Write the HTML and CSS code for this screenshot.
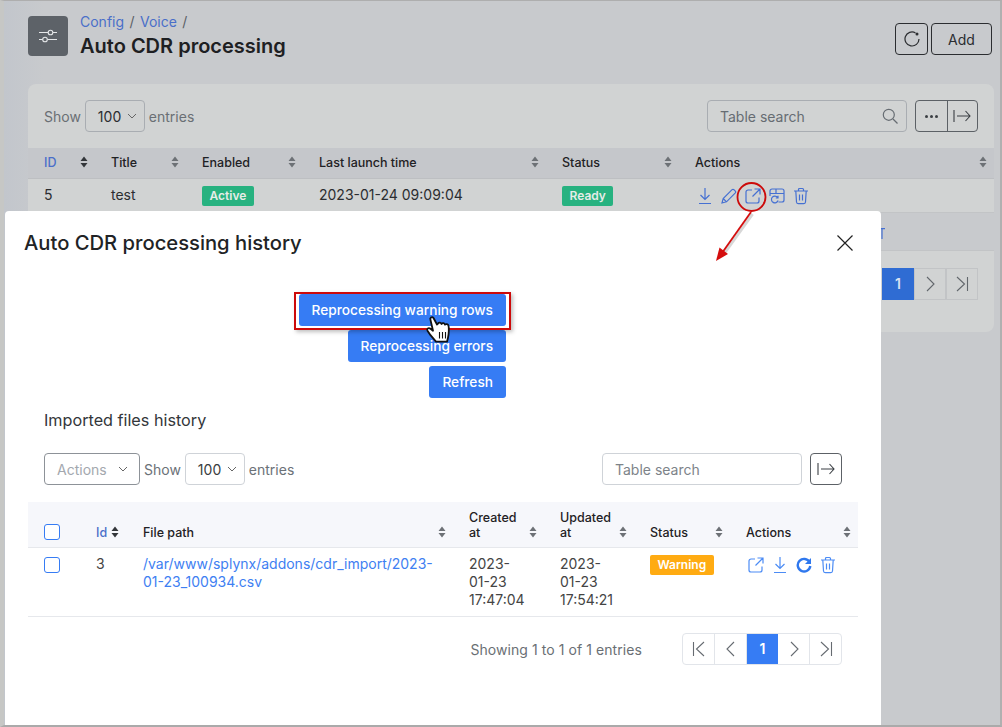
FILE: index.html
```html
<!DOCTYPE html>
<html lang="en">
<head>
  <meta charset="UTF-8">
  <title>Auto CDR processing</title>
  <link rel="stylesheet" href="styles.css">
</head>
<body>

<svg class="sprite" width="0" height="0">
  <symbol id="i-sort" viewBox="0 0 8 12"><path d="M4 0.5 7.5 5H0.5zM4 11.5 0.5 7H7.500z"/></symbol>
  <symbol id="i-download" viewBox="0 0 16 18"><path d="M8 1v11M3.500 8 8 12.500 12.500 8M2 16.500h12" fill="none" stroke="currentColor" stroke-width="1.200"/></symbol>
  <symbol id="i-pencil" viewBox="0 0 16 16"><path d="M1 15 2.200 10.500 10.800 1.900a1.700 1.700 0 0 1 2.400 0l.9.9a1.700 1.700 0 0 1 0 2.400L5.500 13.800zM2.200 10.500l3.300 3.300" fill="none" stroke="currentColor" stroke-width="1.200"/></symbol>
  <symbol id="i-open" viewBox="0 0 16 16"><path d="M7 2H3a2 2 0 0 0-2 2v9a2 2 0 0 0 2 2h9a2 2 0 0 0 2-2V9.500M9.500 1H15v5.500M15 1 7.500 8.500" fill="none" stroke="currentColor" stroke-width="1.200"/></symbol>
  <symbol id="i-clone" viewBox="0 0 16 16"><path d="M3 1h10a2 2 0 0 1 2 2v9a2 2 0 0 1-2 2H9.500M1 8V3a2 2 0 0 1 2-2M1 5.500h14M7 1v4.500" fill="none" stroke="currentColor" stroke-width="1.200"/><path d="M8.600 9.400a3.400 3.400 0 1 0 .5 3.100M9 7.800v2.200H6.800" fill="none" stroke="currentColor" stroke-width="1.200"/></symbol>
  <symbol id="i-trash" viewBox="0 0 16 18"><path d="M1 4h14M5.500 4V2.500a1 1 0 0 1 1-1h3a1 1 0 0 1 1 1V4M2.800 4l.7 11a2 2 0 0 0 2 1.700h5a2 2 0 0 0 2-1.700l.7-11M6.500 7.500v6M9.500 7.500v6" fill="none" stroke="currentColor" stroke-width="1.200"/></symbol>
  <symbol id="i-reload" viewBox="0 0 16 16"><path d="M13.600 5.200A6.300 6.300 0 1 0 14.300 9" fill="none" stroke="currentColor" stroke-width="2.400"/><path d="M15 1v6H9z"/></symbol>
  <symbol id="i-export" viewBox="0 0 18 14"><path d="M1 1v12M4 7h13M12.500 2 17 7l-4.500 5" fill="none" stroke="currentColor" stroke-width="1.100"/></symbol>
  <symbol id="i-first" viewBox="0 0 14 16"><path d="M1.500 1v14M12 1 4.500 8 12 15" fill="none" stroke="currentColor" stroke-width="1.100"/></symbol>
  <symbol id="i-prev" viewBox="0 0 14 16"><path d="M10 1 3 8l7 7" fill="none" stroke="currentColor" stroke-width="1.100"/></symbol>
  <symbol id="i-next" viewBox="0 0 14 16"><path d="M4 1l7 7-7 7" fill="none" stroke="currentColor" stroke-width="1.100"/></symbol>
  <symbol id="i-last" viewBox="0 0 14 16"><path d="M2 1l7.500 7L2 15M12.500 1v14" fill="none" stroke="currentColor" stroke-width="1.100"/></symbol>
  <symbol id="i-chevron" viewBox="0 0 10 6"><path d="M1 1l4 4 4-4" fill="none" stroke="currentColor" stroke-width="1"/></symbol>
</svg>

<div class="window">
  <div class="page">
    <header class="page-head">
      <div class="page-icon">
        <svg width="20" height="16" viewBox="0 0 20 16" fill="none" stroke="#e4e6e8" stroke-width="1.100">
          <path d="M1 4.500h9M15 4.500h4M1 11.500h3.500M9.500 11.500H19"/>
          <circle cx="12.500" cy="4.500" r="2.300"/><circle cx="7" cy="11.500" r="2.300"/>
        </svg>
      </div>
      <div class="page-titles">
        <div class="crumbs"><a>Config</a> <span>/</span> <a>Voice</a> <span>/</span></div>
        <h1>Auto CDR processing</h1>
      </div>
      <div class="page-actions">
        <button class="btn-outline btn-icon">
          <svg width="16" height="16" viewBox="0 0 16 16" fill="none" stroke="currentColor" stroke-width="1.200"><path d="M11.500 1.900A7 7 0 1 0 15 8"/><circle cx="13" cy="3" r=".9" fill="currentColor"/></svg>
        </button>
        <button class="btn-outline btn-add">Add</button>
      </div>
    </header>

    <section class="card">
      <div class="toolbar">
        <span class="muted">Show</span>
        <div class="select">100 <svg class="chev" width="10" height="6"><use href="#i-chevron"/></svg></div>
        <span class="muted">entries</span>
        <div class="spacer"></div>
        <div class="search">
          <span>Table search</span>
          <svg width="16" height="16" viewBox="0 0 16 16" fill="none" stroke="currentColor" stroke-width="1.200"><circle cx="6.800" cy="6.800" r="5.500"/><path d="M11 11l4.500 4.500"/></svg>
        </div>
        <div class="btn-group">
          <button class="more"><i></i><i></i><i></i></button>
          <button><svg width="18" height="14"><use href="#i-export"/></svg></button>
        </div>
      </div>

      <table class="tbl tbl-back">
        <colgroup><col class="c1"><col class="c2"><col class="c3"><col class="c4"><col class="c5"><col class="c6"></colgroup>
        <thead>
          <tr>
            <th class="sorted"><div class="th-in">ID<svg class="sort dark"><use href="#i-sort"/></svg></div></th>
            <th><div class="th-in">Title<svg class="sort"><use href="#i-sort"/></svg></div></th>
            <th><div class="th-in">Enabled<svg class="sort"><use href="#i-sort"/></svg></div></th>
            <th><div class="th-in">Last launch time<svg class="sort"><use href="#i-sort"/></svg></div></th>
            <th><div class="th-in">Status<svg class="sort"><use href="#i-sort"/></svg></div></th>
            <th><div class="th-in">Actions<svg class="sort"><use href="#i-sort"/></svg></div></th>
          </tr>
        </thead>
        <tbody>
          <tr>
            <td>5</td>
            <td>test</td>
            <td><span class="badge badge-green">Active</span></td>
            <td>2023-01-24 09:09:04</td>
            <td><span class="badge badge-green">Ready</span></td>
            <td>
              <div class="acts">
                <svg width="16" height="18"><use href="#i-download"/></svg>
                <svg width="16" height="16"><use href="#i-pencil"/></svg>
                <svg width="16" height="16"><use href="#i-open"/></svg>
                <svg width="16" height="16"><use href="#i-clone"/></svg>
                <svg width="16" height="18"><use href="#i-trash"/></svg>
              </div>
            </td>
          </tr>
          <tr class="row-alt">
            <td colspan="6" class="cut-link">
              <svg width="6" height="11" viewBox="0 0 6 11" fill="none" stroke="currentColor" stroke-width="1.200"><path d="M0 .6h6M3 .6V11"/></svg>
            </td>
          </tr>
        </tbody>
      </table>

      <div class="pager-back">
        <span class="cur">1</span>
        <span><svg width="14" height="16"><use href="#i-next"/></svg></span>
        <span><svg width="14" height="16"><use href="#i-last"/></svg></span>
      </div>
    </section>
  </div>

  <div class="modal">
    <div class="modal-head">
      <h2>Auto CDR processing history</h2>
      <svg class="close" width="16" height="16" viewBox="0 0 16 16" fill="none" stroke="#222" stroke-width="1.200"><path d="M.5.500l15 15M15.500.500l-15 15"/></svg>
    </div>

    <div class="stack">
      <button class="btn-primary">Reprocessing warning rows</button>
      <button class="btn-primary">Reprocessing errors</button>
      <button class="btn-primary">Refresh</button>
    </div>

    <h3>Imported files history</h3>

    <div class="toolbar2">
      <div class="select select-actions">Actions <svg class="chev" width="10" height="6"><use href="#i-chevron"/></svg></div>
      <span class="muted">Show</span>
      <div class="select select-size">100 <svg class="chev" width="10" height="6"><use href="#i-chevron"/></svg></div>
      <span class="muted">entries</span>
      <div class="spacer"></div>
      <div class="search search-plain"><span>Table search</span></div>
      <button class="btn-square"><svg width="18" height="14"><use href="#i-export"/></svg></button>
    </div>

    <table class="tbl tbl-front">
      <colgroup><col class="m1"><col class="m2"><col class="m3"><col class="m4"><col class="m5"><col class="m6"><col class="m7"></colgroup>
      <thead>
        <tr>
          <th><span class="check"></span></th>
          <th class="sorted"><div class="th-in th-tight">Id<svg class="sort dark"><use href="#i-sort"/></svg></div></th>
          <th><div class="th-in">File path<svg class="sort"><use href="#i-sort"/></svg></div></th>
          <th><div class="th-in"><span>Created<br>at</span><svg class="sort"><use href="#i-sort"/></svg></div></th>
          <th><div class="th-in"><span>Updated<br>at</span><svg class="sort"><use href="#i-sort"/></svg></div></th>
          <th><div class="th-in">Status<svg class="sort"><use href="#i-sort"/></svg></div></th>
          <th><div class="th-in">Actions<svg class="sort"><use href="#i-sort"/></svg></div></th>
        </tr>
      </thead>
      <tbody>
        <tr>
          <td><span class="check"></span></td>
          <td>3</td>
          <td><a>/var/www/splynx/addons/cdr_import/2023-01-23_100934.csv</a></td>
          <td>2023-<br>01-23<br>17:47:04</td>
          <td>2023-<br>01-23<br>17:54:21</td>
          <td><span class="badge badge-orange">Warning</span></td>
          <td>
            <div class="acts acts-front">
              <svg width="16" height="16"><use href="#i-open"/></svg>
              <svg width="16" height="18"><use href="#i-download"/></svg>
              <svg class="fill" width="16" height="16"><use href="#i-reload"/></svg>
              <svg width="16" height="18"><use href="#i-trash"/></svg>
            </div>
          </td>
        </tr>
      </tbody>
    </table>

    <div class="tbl-foot">
      <span class="muted showing">Showing 1 to 1 of 1 entries</span>
      <div class="pager">
        <span><svg width="14" height="16"><use href="#i-first"/></svg></span>
        <span><svg width="14" height="16"><use href="#i-prev"/></svg></span>
        <span class="cur">1</span>
        <span><svg width="14" height="16"><use href="#i-next"/></svg></span>
        <span><svg width="14" height="16"><use href="#i-last"/></svg></span>
      </div>
    </div>
  </div>

  <div class="scroll-thumb"></div>

  <!-- annotations drawn on top of the screenshot -->
  <div class="mark-box"></div>
  <svg class="marks" width="1002" height="727" viewBox="0 0 1002 727" fill="none">
    <path d="M751.500 212 722 253" stroke="#7a7a7a" stroke-opacity=".3" stroke-width="3" transform="translate(1 2)"/>
    <circle cx="751.500" cy="197" r="14" stroke="#cc0a0a" stroke-width="1.800"/>
    <path d="M751 212 722 253" stroke="#d40d0d" stroke-width="1.800"/>
    <path d="M716 261 719.500 247.500 728 254z" fill="#d40d0d"/>
    <g transform="translate(0 -5)">
      <path d="M430.500 325c-1-2 1.500-4 3-2l3.500 6.500 1-1c1-1.500 3-1 3.500.5 1-1.500 3-1 3.500.7 1-1 3-.7 3.500 1 .5 1.500.5 8-.5 12l-1 4h-11l-5.500-6.500-3-4.500c-1-2 1-3.500 3-2l2.500 2z" fill="#fff" stroke="#111" stroke-width="1.800" stroke-linejoin="round"/>
      <path d="M439.500 337v6.500M442.500 337v6.500M445.500 337v6.500" stroke="#111" stroke-width="1.100"/>
    </g>
  </svg>
</div>

</body>
</html>
```

FILE: styles.css
```css
html, body {
  margin: 0;
  padding: 0;
  height: 100%;
  overflow: hidden;
  background: #c8cacd;
  font-family: Inter, "Liberation Sans", sans-serif;
  font-size: 14px;
  color: #2b2d30;
}

.sprite {
  position: absolute;
}

.window {
  position: relative;
  box-sizing: border-box;
  width: 1002px;
  height: 727px;
  overflow: hidden;
  border-top: 1px solid #aeaeae;
  border-left: 4px solid #c6c7c5;
  border-right: 2px solid #b0b0b0;
  border-bottom: 2px solid #aaaaaa;
  background: linear-gradient(to right, #c2c6cc, #c8cacd 40px);
}

.page {
  padding: 15px 8px 0 24px;
}

.page-head {
  display: flex;
  align-items: flex-start;
  gap: 12px;
  height: 68px;
}

.page-icon {
  display: flex;
  align-items: center;
  justify-content: center;
  width: 40px;
  height: 40px;
  background: #5d6268;
  border-radius: 4px;
}

.page-titles {
  flex: 1;
}

.crumbs {
  font-size: 14px;
  line-height: 14px;
  margin-top: -1px;
  color: #5b6066;
}

.crumbs a {
  color: #4a6fc9;
}

.crumbs span {
  margin: 0 1.500px;
}

h1 {
  margin: 4px 0 0;
  font-size: 20px;
  line-height: 26px;
  font-weight: 600;
  color: #1e2022;
}

.page-actions {
  display: flex;
  gap: 3px;
  margin-top: 7px;
}

.btn-outline {
  box-sizing: border-box;
  height: 32px;
  background: transparent;
  border: 1px solid #2b2d30;
  border-radius: 4px;
  font: inherit;
  color: #2b2d30;
  padding: 0;
  display: flex;
  align-items: center;
  justify-content: center;
}

.btn-icon {
  width: 33px;
}

.btn-add {
  width: 61px;
}

.card {
  margin-right: -2px;
  width: 966px;
  height: 248px;
  background: #d1d3d3;
  border-radius: 8px;
}

.toolbar {
  display: flex;
  align-items: center;
  gap: 4px;
  height: 64px;
  padding: 0 16px;
  box-sizing: border-box;
}

.muted {
  color: #6a6f74;
}

.spacer {
  flex: 1;
}

.select {
  box-sizing: border-box;
  display: flex;
  align-items: center;
  justify-content: space-between;
  height: 32px;
  border: 1px solid #a9adb2;
  border-radius: 4px;
  padding: 0 7px 0 12px;
  width: 60px;
}

.chev {
  color: #666;
  flex: none;
}

.search {
  box-sizing: border-box;
  display: flex;
  align-items: center;
  justify-content: space-between;
  width: 200px;
  height: 32px;
  border: 1px solid #a9adb2;
  border-radius: 4px;
  padding: 0 8px 0 12px;
  color: #666c72;
}

.btn-group {
  display: flex;
  margin-left: 4px;
  border: 1px solid #5c6166;
  border-radius: 4px;
  height: 32px;
  box-sizing: border-box;
}

.btn-group button {
  width: 30.500px;
  padding: 0;
  border: 0;
  background: transparent;
  color: #3b3f44;
  display: flex;
  align-items: center;
  justify-content: center;
  gap: 2px;
}

.btn-group button + button {
  border-left: 1px solid #5c6166;
}

.more i {
  width: 3px;
  height: 3px;
  border-radius: 50%;
  background: #3b3f44;
}

.tbl {
  border-collapse: collapse;
  table-layout: fixed;
  width: 100%;
}

.tbl th {
  padding: 0 7px 0 16px;
  font-size: 12.500px;
  font-weight: 500;
  text-align: left;
  line-height: 15px;
  vertical-align: bottom;
  color: #1f2124;
}

.tbl td {
  padding: 0 0 0 16px;
}

.th-in {
  display: flex;
  justify-content: space-between;
  align-items: flex-end;
  position: relative;
}

.th-tight {
  justify-content: flex-start;
  gap: 4px;
}

.sort {
  flex: none;
  width: 8px;
  height: 12px;
  margin-bottom: 2px;
  fill: #6d7176;
}

.sort.dark {
  fill: #33363a;
}

.tbl th.sorted {
  color: #4a6fc9;
}

.tbl-back col.c1 { width: 67px; }
.tbl-back col.c2 { width: 91px; }
.tbl-back col.c3 { width: 117px; }
.tbl-back col.c4 { width: 243px; }
.tbl-back col.c5 { width: 133px; }

.tbl-back thead tr {
  background: #c5c7cb;
  height: 30px;
}

.tbl-back th {
  vertical-align: middle;
  border-bottom: 1px solid #bdbfc2;
}

.tbl-back tbody tr {
  height: 34px;
  border-bottom: 1px solid #c2c4c6;
}

.tbl-back tbody td {
  padding-bottom: 2px;
}

.tbl-back .badge {
  margin-top: 4px;
}

.tbl-back .acts {
  padding: 4px 0 0 2px;
}

.tbl-back .row-alt {
  height: 38px;
  background: #c8cacd;
}

.tbl-back .cut-link {
  padding: 4px 0 0 851px;
  color: #4570d2;
  line-height: 0;
}

.badge {
  display: inline-block;
  height: 20px;
  line-height: 20px;
  padding: 0 7.500px;
  border-radius: 2px;
  font-size: 12px;
  font-weight: 600;
  color: #e6ece8;
  vertical-align: middle;
}

.badge-green {
  background: #27b280;
}

.badge-orange {
  background: #ffab12;
  color: #fff;
}

.acts {
  display: flex;
  align-items: center;
  gap: 8px;
  color: #4570d2;
}

.pager-back {
  display: flex;
  justify-content: flex-end;
  margin: 17px 16px 0 0;
}

.pager-back span {
  box-sizing: border-box;
  width: 32px;
  height: 32px;
  display: flex;
  align-items: center;
  justify-content: center;
  border: 1px solid #c2c4c6;
  color: #62676c;
}

.pager-back .cur {
  background: #2f6cd3;
  border-color: #2f6cd3;
  color: #d8e2f2;
  font-weight: 600;
}

.modal {
  position: absolute;
  left: 1px;
  top: 210px;
  width: 876px;
  height: 530px;
  background: #fff;
  border-radius: 4px 4px 0 0;
}

.modal-head {
  display: flex;
  align-items: center;
  justify-content: space-between;
  height: 62px;
  padding: 0 28px 0 19px;
}

h2 {
  margin: 0;
  font-size: 20.200px;
  font-weight: 500;
  color: #212325;
}

.close {
  margin-top: 1px;
}

.stack {
  display: flex;
  flex-direction: column;
  align-items: flex-end;
  gap: 4px;
  width: 501px;
  margin-top: 21px;
}

.btn-primary {
  box-sizing: border-box;
  height: 32px;
  padding: 0 13px 1px;
  border: 0;
  border-radius: 3px;
  background: #367cf4;
  color: #fff;
  font: inherit;
  font-size: 13.700px;
  font-weight: 500;
}

h3 {
  margin: 12px 0 0 39px;
  font-size: 16.200px;
  line-height: 20px;
  font-weight: 400;
  color: #33363a;
}

.toolbar2 {
  display: flex;
  align-items: center;
  gap: 4px;
  margin: 23px 39px 0 39px;
  height: 32px;
}

.toolbar2 .select {
  border-color: #cfd3d8;
  color: #3a3d41;
}

.toolbar2 .muted {
  color: #6b7177;
}

.toolbar2 .select-actions {
  width: 96px;
  padding-right: 11px;
  border-color: #8d9298;
  color: #a3a8ae;
}

.select-size {
  width: 60px;
}

.search-plain {
  border-color: #cfd3d8;
  color: #7d8389;
  margin-right: 4px;
}

.btn-square {
  box-sizing: border-box;
  width: 32px;
  height: 32px;
  padding: 0;
  background: #fff;
  border: 1px solid #5c6166;
  border-radius: 4px;
  color: #3b3f44;
  display: flex;
  align-items: center;
  justify-content: center;
}

.tbl-front {
  width: 830px;
  margin: 17px 0 0 23px;
}

.tbl-front col.m1 { width: 52px; }
.tbl-front col.m2 { width: 47px; }
.tbl-front col.m3 { width: 326px; }
.tbl-front col.m4 { width: 91px; }
.tbl-front col.m5 { width: 90px; }
.tbl-front col.m6 { width: 96px; }

.tbl-front thead tr {
  background: #f6f7fb;
  height: 45px;
}

.tbl-front th {
  padding-bottom: 7px;
  border-bottom: 1px solid #e6e8ec;
}

.tbl-front tbody tr {
  height: 69px;
  border-bottom: 1px solid #e6e8ec;
}

.tbl-front td {
  vertical-align: top;
  padding-top: 7px;
  line-height: 18px;
  color: #444;
}

.tbl-front a {
  color: #3e80f2;
}

.check {
  display: block;
  box-sizing: border-box;
  width: 16px;
  height: 16px;
  border: 1px solid #367cf4;
  border-radius: 3px;
  background: #fff;
}

.tbl-front td .check {
  margin-top: 2px;
}

.acts-front {
  color: #4c8cf5;
  padding: 1px 0 0 2px;
}

.acts-front .fill {
  color: #2f78ee;
  fill: #2f78ee;
}

.tbl-foot {
  display: flex;
  align-items: center;
  justify-content: flex-end;
  gap: 40px;
  margin: 16px 39px 0 0;
}

.showing {
  letter-spacing: .07px;
  padding-top: 2px;
}

.pager {
  display: flex;
  width: 160px;
  height: 32px;
  border: 1px solid #e2e5ea;
  border-radius: 4px;
  box-sizing: border-box;
}

.pager span {
  flex: 1;
  box-sizing: border-box;
  display: flex;
  align-items: center;
  justify-content: center;
  color: #666b71;
  border-right: 1px solid #e2e5ea;
}

.pager span:last-child {
  border-right: 0;
}

.pager .cur {
  background: #367cf4;
  color: #fff;
  font-weight: 600;
  border-right: 0;
}

.scroll-thumb {
  position: absolute;
  left: -4px;
  top: 491px;
  width: 3px;
  height: 31px;
  background: #55595e;
}

.mark-box {
  position: absolute;
  left: 290px;
  top: 291px;
  width: 217px;
  height: 38px;
  box-sizing: border-box;
  border: 2px solid #cc0a0a;
  box-shadow: 2px 2px 4px rgba(0, 0, 0, .25);
}

.marks {
  position: absolute;
  left: -4px;
  top: -1px;
  pointer-events: none;
}
```
